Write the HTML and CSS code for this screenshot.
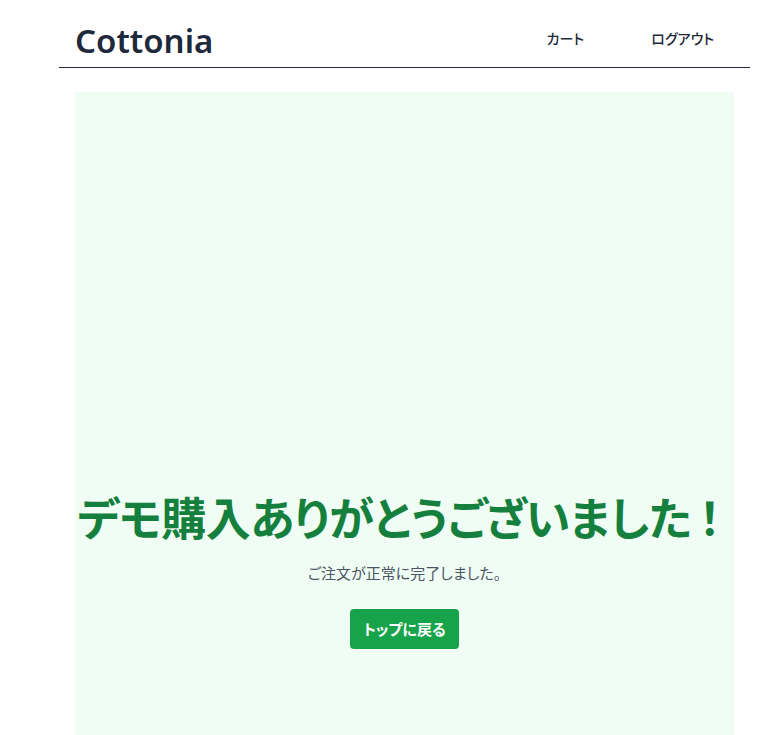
FILE: index.html
```html
<!DOCTYPE html>
<html lang="ja">
  <head>
    <meta charset="UTF-8" />
    <meta name="viewport" content="width=device-width, initial-scale=1.0" />
    <title>Cottonia</title>
    <link rel="stylesheet" href="styles.css">
  </head>
  <body>
    <div class="page">
      <header class="site-header">
        <a class="brand" href="#/">Cottonia</a>
        <nav class="nav">
          <a href="#/cart">カート</a>
          <a href="#/logout">ログアウト</a>
        </nav>
      </header>

      <main class="thanks">
        <h1 class="thanks-title">デモ購入ありがとうございました<span class="bang">！</span></h1>
        <p class="thanks-text">ご注文が正常に完了しました。</p>
        <a class="btn-top" href="#/">トップに戻る</a>
      </main>
    </div>
  </body>
</html>
```

FILE: styles.css
```css
* {
  margin: 0;
  padding: 0;
  box-sizing: border-box;
}

body {
  font-family: "Noto Sans", "Noto Sans CJK JP", sans-serif;
  color: #1f2937;
  background: #fff;
  overflow: hidden;
}

.page {
  width: 691px;
  margin-left: 59px;
}

/* Header */
.site-header {
  display: flex;
  justify-content: space-between;
  align-items: center;
  height: 68px;
  padding: 0 16px;
  border-bottom: 1px solid #1f2937;
}

.brand {
  font-size: 33px;
  font-weight: 600;
  color: #1e293b;
  text-decoration: none;
  margin-top: 14px;
}

.nav {
  display: flex;
  gap: 67px;
  padding-right: 20px;
  margin-top: 8px;
}

.nav a {
  font-family: "Noto Sans CJK JP", sans-serif;
  font-size: 14px;
  font-weight: 500;
  color: #1f2937;
  text-decoration: none;
  font-feature-settings: "palt";
}

/* Thanks block */
.thanks {
  margin: 24px 16px 0;
  background: #f0fdf4;
  height: 660px;
  padding-top: 398px;
  text-align: center;
}

.thanks-title {
  font-family: "Noto Sans CJK JP", sans-serif;
  font-size: 45px;
  font-weight: 700;
  color: #15803d;
  line-height: 1.2;
  white-space: nowrap;
  font-feature-settings: "palt";
  letter-spacing: -0.5px;
}

.thanks-title .bang {
  font-feature-settings: normal;
  margin-left: -4px;
}

.thanks-text {
  font-family: "Noto Sans CJK JP", sans-serif;
  font-size: 15px;
  color: #4b5563;
  margin-top: 18px;
  font-feature-settings: "palt";
}

.btn-top {
  display: inline-block;
  margin-top: 26px;
  width: 109px;
  height: 40px;
  line-height: 40px;
  background: #16a34a;
  color: #fff;
  font-family: "Noto Sans CJK JP", sans-serif;
  font-size: 15px;
  font-weight: 700;
  text-decoration: none;
  border-radius: 4px;
  font-feature-settings: "palt";
}
```
